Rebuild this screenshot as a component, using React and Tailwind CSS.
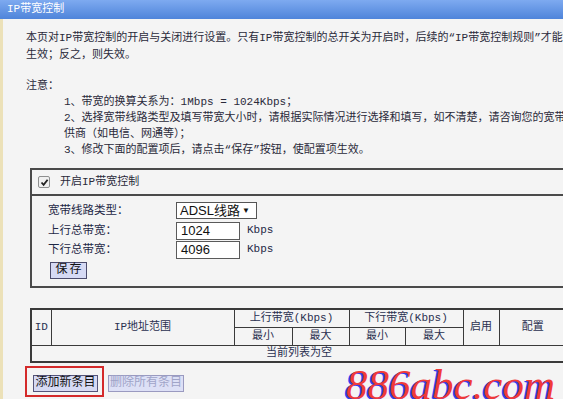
import React from 'react';

const base = { fontFamily: '"Liberation Mono", "Noto Sans CJK SC", monospace' };

const notes = [
  '1、带宽的换算关系为：1Mbps = 1024Kbps；',
  '2、选择宽带线路类型及填写带宽大小时，请根据实际情况进行选择和填写，如不清楚，请咨询您的宽带提',
  '供商（如电信、网通等）；',
  '3、修改下面的配置项后，请点击“保存”按钮，使配置项生效。',
];

const Check = () => (
  <span className="w-[12px] h-[12px] border border-[#8e8f8f] bg-[#f0f0f0] rounded-[2px] flex items-center justify-center">
    <svg width="9" height="9" viewBox="0 0 9 9">
      <path d="M1.5 4.5 L3.6 6.8 L7.6 1.8" stroke="#222" strokeWidth="1.8" fill="none" />
    </svg>
  </span>
);

const Field = ({ value }) => (
  <div className="w-[64px] h-[18px] bg-white border border-[#5a5a5a] pl-[4px] text-[13px] leading-[16px] text-[#111] font-['Liberation_Sans']">
    {value}
  </div>
);

export default function App() {
  const th = 'border border-[#3a3a3a] font-normal text-center p-0';
  return (
    <div
      style={base}
      className="relative w-[563px] h-[399px] overflow-hidden bg-[#f4f4f4] text-[11px] text-[#2a2a3a]"
    >
      <div className="h-[19px] bg-linear-to-b from-[#7eaaf0] to-[#4e84da] text-white text-[11px] leading-[19px] px-[7px] whitespace-nowrap">
        IP带宽控制
      </div>

      <div className="h-[380px] border-l-[3px] border-[#ece1b8]">
        <div className="pl-[23px] pt-[11px] leading-[17px] whitespace-nowrap">
          <div>本页对IP带宽控制的开启与关闭进行设置。只有IP带宽控制的总开关为开启时，后续的“IP带宽控制规则”才能够</div>
          <div>生效；反之，则失效。</div>
        </div>

        <div className="pl-[23px] mt-[14px] leading-[16px] whitespace-nowrap">
          <div>注意：</div>
          {notes.map((n, i) => (
            <div key={i} className="pl-[38px]">{n}</div>
          ))}
        </div>

        <div className="ml-[27px] mt-[10px] w-[540px] border-2 border-[#4a4a4a]">
          <div className="h-[26px] flex items-center gap-[10px] pl-[6px] border-b-2 border-[#4a4a4a]">
            <Check />
            <span>开启IP带宽控制</span>
          </div>
          <div className="pl-[16px] pt-[6px] pb-[7px] text-[#1e2846] text-[11.5px]">
            <div className="grid grid-cols-[128px_auto] items-center">
              <div className="h-[20px] leading-[17px]">宽带线路类型：</div>
              <div className="h-[20px]">
                <div className="w-[81px] h-[17px] bg-white border border-[#555] flex items-center justify-between pl-[3px] pr-[6px] text-[13px] font-['Liberation_Sans','Noto_Sans_CJK_SC'] text-[#111]">
                  <span className="leading-none">ADSL线路</span>
                  <span className="text-[8px] leading-none">▼</span>
                </div>
              </div>
              <div className="h-[19px] leading-[17px]">上行总带宽：</div>
              <div className="h-[19px] flex items-start gap-[7px]">
                <Field value="1024" />
                <span className="text-[11px] leading-[17px] text-[#1e2846]">Kbps</span>
              </div>
              <div className="h-[19px] leading-[17px]">下行总带宽：</div>
              <div className="h-[19px] flex items-start gap-[7px]">
                <Field value="4096" />
                <span className="text-[11px] leading-[17px] text-[#1e2846]">Kbps</span>
              </div>
            </div>
            <button className="mt-[2px] ml-[2px] w-[37px] h-[17px] bg-[#d6daf4] border border-[#4c4c6c] text-[12px] leading-[15px] text-[#111] tracking-[2px] pl-[2px]">
              保存
            </button>
          </div>
        </div>

        <table className="ml-[27px] mt-[20px] w-[536px] table-fixed border-collapse border-2 border-[#3a3a3a] text-[#2a3050]">
          <colgroup>
            <col className="w-[20px]" />
            <col className="w-[183px]" />
            <col className="w-[58px]" />
            <col className="w-[57px]" />
            <col className="w-[56px]" />
            <col className="w-[58px]" />
            <col className="w-[36px]" />
            <col className="w-[68px]" />
          </colgroup>
          <thead>
            <tr className="h-[18px]">
              <th rowSpan={2} className={th}>ID</th>
              <th rowSpan={2} className={th}>IP地址范围</th>
              <th colSpan={2} className={th}>上行带宽(Kbps)</th>
              <th colSpan={2} className={th}>下行带宽(Kbps)</th>
              <th rowSpan={2} className={th}>启用</th>
              <th rowSpan={2} className={th}>配置</th>
            </tr>
            <tr className="h-[18px]">
              <th className={th}>最小</th>
              <th className={th}>最大</th>
              <th className={th}>最小</th>
              <th className={th}>最大</th>
            </tr>
          </thead>
          <tbody>
            <tr className="h-[17px]">
              <td colSpan={8} className="border border-[#3a3a3a] text-center p-0 leading-[15px]">当前列表为空</td>
            </tr>
          </tbody>
        </table>

        <div className="ml-[22px] mt-[3px] flex items-start gap-[4px]">
          <div className="w-[79px] h-[31px] border-2 border-[#d42a2a] pl-[6px] pt-[7px]">
            <button className="w-[65px] h-[17px] bg-[#d6daf4] border border-[#55557a] text-[12px] leading-[15px] text-[#111] whitespace-nowrap">
              添加新条目
            </button>
          </div>
          <button className="mt-[9px] w-[76px] h-[17px] bg-[#dde0f6] border border-[#9a9ac0] text-[12px] leading-[15px] text-[#a0a4c8] whitespace-nowrap">
            删除所有条目
          </button>
        </div>
      </div>

      <div className="absolute right-[8px] bottom-[-7px] text-[43px] leading-none italic text-[#f03a3a] font-['Liberation_Serif'] [text-shadow:-2px_1px_0_#3040f0] whitespace-nowrap">
        886abc.com
      </div>
    </div>
  );
}
